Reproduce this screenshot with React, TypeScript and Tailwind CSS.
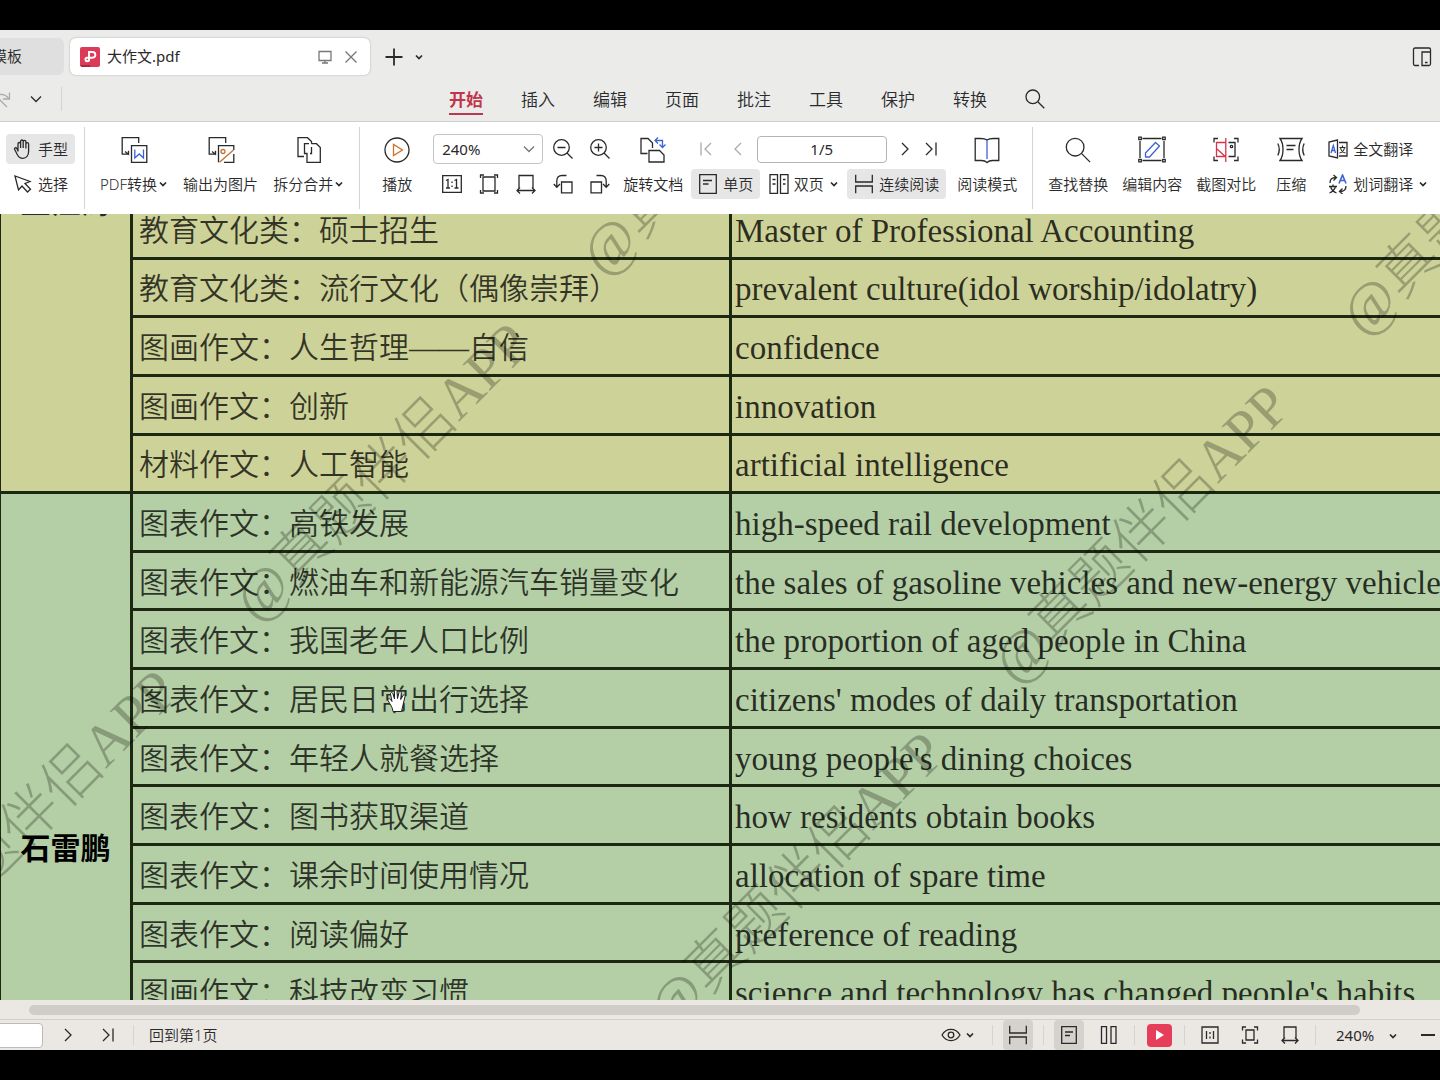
import type { ReactNode } from 'react';
import clsx from 'clsx';

type IconProps = { w?: number; h?: number; className?: string; children: ReactNode };

const Icon = ({ w = 20, h = 20, className, children }: IconProps) => (
  <svg
    width={w}
    height={h}
    viewBox={`0 0 ${w} ${h}`}
    fill="none"
    stroke="currentColor"
    strokeWidth="1.3"
    className={clsx('shrink-0', className)}
    aria-hidden="true"
  >
    {children}
  </svg>
);

const Caret = ({ className }: { className?: string }) => (
  <Icon w={10} h={10} className={className}>
    <path d="M2 3.5 5 6.5 8 3.5" strokeWidth="1.7" />
  </Icon>
);

const WideCaret = ({ className }: { className?: string }) => (
  <Icon w={12} h={10} className={className}>
    <path d="M1 2.5 6 7.5 11 2.5" />
  </Icon>
);

const NextIcon = () => (
  <Icon w={12} h={16}><path d="M3 2 9 8 3 14" /></Icon>
);

const LastIcon = () => (
  <Icon w={14} h={16}><path d="M2 2 8 8 2 14M12 1.5V14.5" /></Icon>
);

const ActualSizeIcon = () => (
  <Icon>
    <path d="M.7 1.7H19.3V18.3H.7Z" />
    <path d="M4 6.5 6 5.5V14M4 14H8M12.5 6.5 14.5 5.5V14M12.5 14H16.5M10 7.5V9M10 11.5V13" />
  </Icon>
);

const FitPageIcon = () => (
  <Icon>
    <path d="M4 3H16V17H4Z" />
    <path d="M1.5 4V1H5M15 1H18.5V4M18.5 16V19H15M5 19H1.5V16" />
  </Icon>
);

const FitWidthIcon = () => (
  <Icon>
    <path d="M3 14V1.5H17V14M1 16.5H19M4 13.5 1 16.5 4 19.5M16 13.5 19 16.5 16 19.5" />
  </Icon>
);

const SinglePageIcon = () => (
  <Icon>
    <path d="M1.7 .7H18.3V19.3H1.7ZM5 6.5H14M5 10H10.5" />
  </Icon>
);

const ContinuousIcon = () => (
  <Icon>
    <path d="M1.7 .7V8H18.3V.7M1.7 19.3V12H18.3V19.3" />
  </Icon>
);

const SearchIcon = ({ size = 20 }: { size?: number }) => (
  <svg width={size} height={size} viewBox="0 0 20 20" fill="none" stroke="currentColor" strokeWidth={26 / size} aria-hidden="true">
    <circle cx="7.8" cy="7.8" r="6.8" />
    <path d="M12.8 12.8 19.3 19.3" />
  </svg>
);

const HandIcon = () => (
  <Icon>
    <path d="M5 12.5V4.8a1.3 1.3 0 0 1 2.6 0V9V2.3a1.3 1.3 0 0 1 2.6 0V9V2.8a1.3 1.3 0 0 1 2.7 0V9.5V5a1.3 1.3 0 0 1 2.7 0v7.5c0 4-2.3 6.8-5.8 6.8-3 0-4.3-1.5-5.4-3.6L1.7 10.5c-.8-1.6 1.3-2.5 2.2-1L5 12" />
  </Icon>
);

const ArrowIcon = () => (
  <Icon>
    <path d="M2 2 5.5 16 9 12 14.5 18 17.5 15.2 12 9.5 17 7.5Z" />
  </Icon>
);

const ToWordIcon = () => (
  <Icon w={28} h={28}>
    <path d="M18.7 7V1.7H2.2V18.2H9M5 15.5 8.5 18.2V14.8" />
    <path d="M11.5 9.7H26.8V26.3H11.5Z" />
    <path d="M14.8 13.5V22L19.2 18 23.5 22V13.5" stroke="#3c62d8" />
  </Icon>
);

const ToImageIcon = () => (
  <Icon w={28} h={28}>
    <path d="M18.7 7V1.7H2.2V18.2H9M5 15.5 8.5 18.2V14.8" />
    <path d="M26.8 14V9.7H11.5V26.3M17 26.3H26.8V18" />
    <circle cx="16" cy="15.5" r="2" stroke="#c9702e" />
    <path d="M26.5 14 12.5 26.3" stroke="#c9702e" />
  </Icon>
);

const SplitMergeIcon = () => (
  <Icon w={28} h={28}>
    <path d="M9 20.5H3V1.7H12.5L16.5 5.5V7.7M14 7.7H9.5V17.5H12.5" />
    <path d="M16.5 11V17.5H15M16.5 7.7H21.5L25.3 11.5V26.3H12V17.5" />
  </Icon>
);

const PlayIcon = () => (
  <Icon w={28} h={28}>
    <circle cx="14" cy="14" r="12" />
    <path d="M10.500 8.5V19.5L19.5 14Z" stroke="#d0702c" />
  </Icon>
);

const ZoomGlass = ({ plus }: { plus?: boolean }) => (
  <Icon>
    <circle cx="8.5" cy="8.5" r="7.8" />
    <path d="M14 14 19.5 19.5M4.5 8.5H12.5" />
    {plus && <path d="M8.5 4.5V12.5" />}
  </Icon>
);

const RotateIcon = ({ flip }: { flip?: boolean }) => (
  <Icon>
    <g transform={flip ? 'translate(20 0) scale(-1 1)' : undefined}>
      <path d="M8.5 8H19V18.8H8.5Z" />
      <path d="M13.5 1.5H9C5.5 1.5 3.8 3.5 3.8 7V13M.7 10 3.8 13.2 7 10" />
    </g>
  </Icon>
);

const RotateDocIcon = () => (
  <Icon w={28} h={28}>
    <path d="M8.5 17.5H2V2.5H9L13.5 7V12" />
    <path d="M10 26V14.5H20.500L25 19V26Z" />
    <path d="M16.5 4.5H23.5V11M19 1.5 16 4.5 19 7.5M20.5 8.5 23.5 11.5 26.5 8.5" stroke="#3c62d8" />
  </Icon>
);

const TwoPageIcon = () => (
  <Icon>
    <path d="M1 .7H8.5V19.3H1ZM11.5 .7H19V19.3H11.5ZM3.5 5.5H6.5M3.5 10H6.5M14 5.5H16.5M14 10H16.5" />
  </Icon>
);

const BookIcon = () => (
  <Icon w={28} h={28}>
    <path d="M14 4C12 2.5 9 2.5 7.5 2.5H2.2V24.5H8.5C10.5 24.5 12.5 25 14 26.5C15.5 25 17.5 24.5 19.5 24.5H25.8V2.5H20.5C19 2.5 16 2.5 14 4Z" />
    <path d="M14 4V23" stroke="#3c62d8" />
  </Icon>
);

const EditContentIcon = () => (
  <Icon w={28} h={28}>
    <path d="M4.5 2.5H23.5M4.5 24.5H23.5M2 5V22M26 5V22" />
    <path d="M.8 1.2H3.3V3.7H.8ZM24.7 1.2H27.2V3.7H24.7ZM.8 23.3H3.3V25.8H.8ZM24.7 23.3H27.2V25.8H24.7Z" />
    <path d="M7.5 21V17L17.5 6.5 21.5 10 11.5 21Z" stroke="#3c62d8" strokeLinejoin="round" />
  </Icon>
);

const CompareIcon = () => (
  <Icon w={28} h={28}>
    <path d="M2 6.5V2.5H6M22 2.5H26V6.5M26 20.5V24.5H22M6 24.5H2V20.5" />
    <path d="M16.5 6.5H23V20.5H16.5" />
    <circle cx="19.5" cy="10.5" r="1.2" />
    <path d="M13.8 2V26M13.8 6.5H4.5V20.5H13.8M5 13 13.8 21" stroke="#d6334c" />
  </Icon>
);

const CompressIcon = () => (
  <Icon w={28} h={28}>
    <path d="M3 2.5H25C21 8 21 19 25 24.5H3C7 19 7 8 3 2.5ZM9.5 9.5H18.5M9.5 13.5H16.5" />
    <path d="M.8 7.5C2.5 11 2.5 16 .8 19.5M27.2 7.5C25.5 11 25.5 16 27.2 19.5" />
  </Icon>
);

const FullTranslateIcon = () => (
  <Icon>
    <path d="M11 3.5H19V17H11M9.5 1 1 3V17L9.5 19Z" />
    <path d="M3 14 5.3 6.5 7.5 14M3.8 11.5H6.8" stroke="#3c62d8" />
    <path d="M11.5 8.5H17.5M14.5 6.5V8.5M16.5 8.5C16 11.5 14 13.5 11.5 14M12.5 8.5C13 11.5 15 13.5 17.5 14" strokeWidth="1.1" />
  </Icon>
);

const WordTranslateIcon = () => (
  <Icon>
    <path d="M2 9C2 5 4 3.5 8 3.5M5.5 1 8.5 3.5 5.5 6.5M18 12C18 16 16 17.5 12 17.5M14.5 14.5 11.5 17.5 14.5 20" />
    <path d="M11 9.5 14.5 1 18 9.5M12.2 6.5H16.8" stroke="#3c62d8" strokeWidth="1.6" />
    <path d="M1 12.5H9M5 10.5V12.5M7.5 12.5C6.5 16 4 18 1.5 19M2.5 12.5C3.5 16 6 18 8.5 19" />
  </Icon>
);

const BigButton = ({ icon, label, caret }: { icon: ReactNode; label: string; caret?: boolean }) => (
  <button type="button" className="flex shrink-0 flex-col items-center gap-2.5 pt-3.5">
    <span className="flex h-7 items-center">{icon}</span>
    <span className="flex items-center gap-px text-[15px] leading-5">
      {label}
      {caret && <Caret />}
    </span>
  </button>
);

const SmallButton = ({ icon, label, active, caret }: { icon: ReactNode; label: string; active?: boolean; caret?: boolean }) => (
  <button
    type="button"
    className={clsx('flex h-[30px] items-center gap-[5px] rounded px-[7px] text-[15px]', active && 'bg-[#e6e6e6]')}
  >
    {icon}
    {label}
    {caret && <Caret />}
  </button>
);

const IconButton = ({ label, className, children }: { label: string; className?: string; children: ReactNode }) => (
  <button type="button" aria-label={label} className={clsx('flex items-center justify-center', className)}>
    {children}
  </button>
);

const Divider = ({ className }: { className?: string }) => (
  <div className={clsx('w-px shrink-0 bg-[#d4d4d4]', className)} />
);

const menus = ['开始', '插入', '编辑', '页面', '批注', '工具', '保护', '转换'];

function TitleTabs() {
  return (
    <div className="flex h-[53px] items-center">
      <button type="button" className="-ml-2 flex h-[37px] w-[72px] items-center rounded-r-md bg-[#dfdfdf] text-[15px]">
        模板
      </button>
      <div className="ml-1.5 flex h-[37px] w-[300px] items-center rounded-md bg-white pr-3 pl-2.5 text-[15px] shadow-[0_0_2px_rgba(0,0,0,0.3)]">
        <svg width="20" height="20" viewBox="0 0 20 20" fill="none" aria-hidden="true">
          <rect width="20" height="20" rx="2" fill="#dd3a58" />
          <path d="M0 18H10V20H2Z" fill="#a92743" />
          <path d="M9 14.5V5H12.5A2.8 2.8 0 0 1 12.5 10.7H7A1.8 1.8 0 1 0 9 12.5" stroke="#fff" strokeWidth="1.9" />
        </svg>
        <span className="ml-[7px] flex-1 font-normal">大作文.pdf</span>
        <Icon w={14} h={14} className="text-[#777]">
          <path d="M1 1.5H13V10.5H1ZM7 10.5V13M4 13H10" />
        </Icon>
        <IconButton label="关闭" className="ml-3 text-[#777]">
          <Icon w={14} h={14}><path d="M1.5 1.5 12.5 12.5M12.5 1.5 1.5 12.5" /></Icon>
        </IconButton>
      </div>
      <IconButton label="新建" className="ml-3.5">
        <Icon><path d="M10 1.5V18.5M1.5 10H18.5" strokeWidth="1.8" /></Icon>
      </IconButton>
      <IconButton label="更多标签" className="ml-2.5">
        <Caret />
      </IconButton>
      <IconButton label="多设备" className="mr-2 ml-auto">
        <Icon>
          <path d="M7 18.5H3A1.5 1.5 0 0 1 1.5 17V2.5A1.5 1.5 0 0 1 3 1H17A1.5 1.5 0 0 1 18.5 2.5V17A1.5 1.5 0 0 1 17 18.5H10V5H18.5M13 15.5H15.5" />
        </Icon>
      </IconButton>
    </div>
  );
}

function MenuBar() {
  return (
    <div className="flex h-[38px] pb-1.5">
      <IconButton label="重做" className="-ml-2 text-[#aaa]">
        <Icon><path d="M1 11C4 5 11 3 16.5 9M17.5 3.5V10H11M7 10 15 18" /></Icon>
      </IconButton>
      <IconButton label="更多" className="ml-[18px]">
        <WideCaret />
      </IconButton>
      <Divider className="mt-1 ml-[19px] h-6" />
      <nav className="ml-[387px] flex shrink-0 items-center gap-[38px] text-[17px]">
        {menus.map((menu, i) => (
          <button
            key={menu}
            type="button"
            className={clsx('border-b-2 pt-1 leading-[26px]', i === 0 ? 'border-[#b8384e] font-bold text-[#c0344c]' : 'border-transparent')}
          >
            {menu}
          </button>
        ))}
        <IconButton label="搜索"><SearchIcon /></IconButton>
      </nav>
    </div>
  );
}

function Ribbon() {
  return (
    <div className="flex h-[93px] shrink-0 overflow-hidden border-t border-[#cfcfcf] bg-white">
      <div className="flex flex-col gap-[5px] pt-3 pl-1.5">
        <SmallButton icon={<HandIcon />} label="手型" active />
        <SmallButton icon={<ArrowIcon />} label="选择" />
      </div>
      <Divider className="mt-[5px] ml-[9px] h-[82px]" />
      <div className="ml-[15px] flex gap-[15px]">
        <BigButton icon={<ToWordIcon />} label="PDF转换" caret />
        <BigButton icon={<ToImageIcon />} label="输出为图片" />
        <BigButton icon={<SplitMergeIcon />} label="拆分合并" caret />
      </div>
      <Divider className="mt-[5px] ml-[15px] h-[82px]" />
      <div className="ml-[22px] flex">
        <BigButton icon={<PlayIcon />} label="播放" />
      </div>
      <div className="ml-[21px] grid w-[177px] shrink-0 content-start gap-[5px] pt-3">
        <div className="flex h-[30px] items-center">
          <div className="relative">
            <select aria-label="缩放" className="h-[30px] w-[110px] appearance-none rounded border border-[#c4c4c4] bg-white pl-2 text-[15px] font-normal">
              <option>240%</option>
            </select>
            <WideCaret className="pointer-events-none absolute top-2.5 right-2 text-[#777]" />
          </div>
          <IconButton label="缩小" className="ml-2.5"><ZoomGlass /></IconButton>
          <IconButton label="放大" className="ml-auto"><ZoomGlass plus /></IconButton>
        </div>
        <div className="flex h-[30px] items-center justify-between pl-[9px]">
          <IconButton label="实际大小"><ActualSizeIcon /></IconButton>
          <IconButton label="适合页面"><FitPageIcon /></IconButton>
          <IconButton label="适合宽度"><FitWidthIcon /></IconButton>
          <IconButton label="向左旋转"><RotateIcon /></IconButton>
          <IconButton label="向右旋转"><RotateIcon flip /></IconButton>
        </div>
      </div>
      <div className="ml-[13px] flex">
        <BigButton icon={<RotateDocIcon />} label="旋转文档" />
      </div>
      <div className="ml-2 flex w-[255px] shrink-0 flex-col gap-[5px] pt-3">
        <div className="flex h-[30px] items-center justify-between px-2">
          <IconButton label="第一页" className="text-[#aaa]">
            <Icon w={14} h={16}><path d="M12 2 6 8 12 14M2 1.5V14.5" /></Icon>
          </IconButton>
          <IconButton label="上一页" className="ml-1.5 text-[#aaa]">
            <Icon w={12} h={16}><path d="M9 2 3 8 9 14" /></Icon>
          </IconButton>
          <input aria-label="页码" defaultValue="1/5" className="h-[27px] w-[130px] rounded border border-[#b4b4b4] text-center text-[15px] font-normal" />
          <IconButton label="下一页"><NextIcon /></IconButton>
          <IconButton label="最后一页"><LastIcon /></IconButton>
        </div>
        <div className="flex justify-between">
          <SmallButton icon={<SinglePageIcon />} label="单页" active />
          <SmallButton icon={<TwoPageIcon />} label="双页" caret />
          <SmallButton icon={<ContinuousIcon />} label="连续阅读" active />
        </div>
      </div>
      <div className="ml-[11px] flex">
        <BigButton icon={<BookIcon />} label="阅读模式" />
      </div>
      <Divider className="mt-[5px] ml-[15px] h-[82px]" />
      <div className="ml-[15px] flex gap-[14px]">
        <BigButton icon={<SearchIcon size={26} />} label="查找替换" />
        <BigButton icon={<EditContentIcon />} label="编辑内容" />
        <BigButton icon={<CompareIcon />} label="截图对比" />
      </div>
      <div className="ml-5 flex">
        <BigButton icon={<CompressIcon />} label="压缩" />
      </div>
      <div className="ml-[15px] flex shrink-0 flex-col gap-[5px] pt-3">
        <SmallButton icon={<FullTranslateIcon />} label="全文翻译" />
        <SmallButton icon={<WordTranslateIcon />} label="划词翻译" caret />
      </div>
    </div>
  );
}

type Row = { zh: string; en: string };

const yellowRows: Row[] = [
  { zh: '教育文化类：硕士招生', en: 'Master of Professional Accounting' },
  { zh: '教育文化类：流行文化（偶像崇拜）', en: 'prevalent culture(idol worship/idolatry)' },
  { zh: '图画作文：人生哲理——自信', en: 'confidence' },
  { zh: '图画作文：创新', en: 'innovation' },
  { zh: '材料作文：人工智能', en: 'artificial intelligence' },
];

const greenRows: Row[] = [
  { zh: '图表作文：高铁发展', en: 'high-speed rail development' },
  { zh: '图表作文：燃油车和新能源汽车销量变化', en: 'the sales of gasoline vehicles and new-energy vehicles' },
  { zh: '图表作文：我国老年人口比例', en: 'the proportion of aged people in China' },
  { zh: '图表作文：居民日常出行选择', en: "citizens' modes of daily transportation" },
  { zh: '图表作文：年轻人就餐选择', en: "young people's dining choices" },
  { zh: '图表作文：图书获取渠道', en: 'how residents obtain books' },
  { zh: '图表作文：课余时间使用情况', en: 'allocation of spare time' },
  { zh: '图表作文：阅读偏好', en: 'preference of reading' },
  { zh: '图画作文：科技改变习惯', en: "science and technology has changed people's habits" },
];

const RowCells = ({ row }: { row: Row }) => (
  <>
    <td className="overflow-hidden border-3 border-[#1c2812] pt-1 pl-1.5 text-[30px] leading-10 font-[350] text-black/75">
      {row.zh}
    </td>
    <td className="overflow-hidden border-3 border-r-0 border-[#1c2812] pt-1 pl-[3px] text-[33px] leading-10 text-black/80">{row.en}</td>
  </>
);

// centre of every stamp on the page, in page coordinates
const watermarks = [
  'left-[729px] top-[-88px]',
  'left-[1489px] top-[-28px]',
  'left-[382px] top-[258px]',
  'left-[1141px] top-[320px]',
  'left-[29px] top-[605px]',
  'left-[796px] top-[667px]',
];

function Document() {
  return (
    <main className="relative min-h-0 flex-1 overflow-hidden bg-[#b4cfa5] font-['Liberation_Serif','Noto_Sans_CJK_SC',serif]">
      <table className="-mt-4 h-[824px] w-full table-fixed border-collapse whitespace-nowrap">
        <colgroup>
          <col className="w-[131px]" />
          <col className="w-[599px]" />
          <col />
        </colgroup>
        <tbody className="bg-[#cdd298]">
          {yellowRows.map((row, i) => (
            <tr key={row.en}>
              {i === 0 && (
                <th rowSpan={yellowRows.length} className="border-3 border-l border-[#1c2812] align-top text-[30px] leading-6">
                  <div className="-mt-2.5">王江涛</div>
                </th>
              )}
              <RowCells row={row} />
            </tr>
          ))}
        </tbody>
        <tbody className="bg-[#b4cfa5]">
          {greenRows.map((row, i) => (
            <tr key={row.en}>
              {i === 0 && (
                <th rowSpan={greenRows.length} className="border-3 border-l border-[#1c2812] pt-[184px] text-[30px] leading-10 text-black">
                  石雷鹏
                </th>
              )}
              <RowCells row={row} />
            </tr>
          ))}
        </tbody>
      </table>
      {watermarks.map((place) => (
        <div
          key={place}
          className={clsx('pointer-events-none absolute -translate-x-1/2 -translate-y-1/2 -rotate-45 text-[58px] leading-none font-light whitespace-nowrap text-black/25', place)}
        >
          @真题伴侣APP
        </div>
      ))}
      <svg width="20" height="24" viewBox="0 0 20 24" className="absolute top-[475px] left-[387px]" aria-hidden="true">
        <path
          d="M6 22.5 5 18.5 1 11.5C.5 9.5 2.5 9 3.5 10.5L5 12.5 3.5 5C3.5 3 5.5 3 6 5L7.5 10 7.5 2.5C7.5 .5 9.8 .5 10 2.5L10.5 9.5 12 3.5C12.5 1.8 14.5 2.2 14.3 4L13.7 10.5 16 6.5C17 5 18.5 6 18 7.5L16 16 14.5 22.5Z"
          fill="#fff"
          stroke="#222"
        />
      </svg>
    </main>
  );
}

function StatusBar() {
  return (
    <footer className="shrink-0 bg-[#ebe7e3]">
      <div className="flex h-5 items-start border-b border-[#d2cecb] pt-[5px] pr-20 pl-[29px]">
        <div className="h-[10px] flex-1 rounded-full bg-[#d0ccc8]" />
      </div>
      <div className="flex h-[30px] items-center text-[15px]">
        <input aria-label="跳转页码" className="-ml-2 h-[25px] w-[51px] rounded border border-[#bbb] bg-white" />
        <IconButton label="下一页" className="ml-[19px]"><NextIcon /></IconButton>
        <IconButton label="最后一页" className="ml-[27px]"><LastIcon /></IconButton>
        <Divider className="ml-[18px] h-5" />
        <button type="button" className="ml-[15px]">回到第1页</button>
        <div className="ml-auto flex items-center">
          <button type="button" aria-label="护眼模式" className="flex items-center gap-1">
            <Icon>
              <path d="M1 10C5.5 2.5 14.5 2.5 19 10C14.5 17.5 5.5 17.5 1 10Z" />
              <circle cx="10" cy="10" r="2.8" />
            </Icon>
            <Caret />
          </button>
          <Divider className="mx-[10px] ml-[17px] h-5" />
          <IconButton label="连续阅读" className="size-[30px] rounded bg-[#d5d1cd]"><ContinuousIcon /></IconButton>
          <Divider className="mx-[10px] h-5" />
          <IconButton label="单页" className="size-[30px] rounded bg-[#d5d1cd]">
            <Icon w={16} h={18}><path d="M.7 .7H15.3V17.3H.7ZM4 6H12M4 9.5H9" /></Icon>
          </IconButton>
          <IconButton label="双页" className="mx-4">
            <Icon w={18} h={18}><path d="M1.5 .7H6.5V17.3H1.5ZM11 .7H16V17.3H11Z" /></Icon>
          </IconButton>
          <Divider className="h-5" />
          <IconButton label="播放" className="mx-3 h-[23px] w-[25px] rounded-sm bg-[#e63e5a]">
            <svg width="10" height="12" viewBox="0 0 10 12" aria-hidden="true"><path d="M1 1 9 6 1 11Z" fill="#fff" /></svg>
          </IconButton>
          <Divider className="h-5" />
          <div className="mx-4 flex items-center gap-[22px]">
            <IconButton label="实际大小">
              <Icon w={18} h={18}><path d="M1 1H17V17H1ZM5.5 5V13M12.5 5V13M9 6V8M9 10.5V12.5" /></Icon>
            </IconButton>
            <IconButton label="适合页面">
              <Icon w={18} h={18}><path d="M5 4H13V14H5ZM1.5 4.5V1H5M13 1H16.5V4.5M16.5 13.5V17H13M5 17H1.5V13.5" /></Icon>
            </IconButton>
            <IconButton label="适合宽度">
              <Icon w={18} h={18}><path d="M3 12.5V1H15V12.5M1 14.5H17M4 11.5 1 14.5 4 17.5M14 11.5 17 14.5 14 17.5" /></Icon>
            </IconButton>
          </div>
          <Divider className="h-5" />
          <div className="relative ml-5">
            <select aria-label="页面缩放" className="h-6 w-[62px] appearance-none text-[15px] font-normal">
              <option>240%</option>
            </select>
            <Caret className="pointer-events-none absolute top-2 right-0" />
          </div>
          <IconButton label="缩小" className="ml-[22px]">
            <Icon w={20} h={10}><path d="M1 5H15" strokeWidth="2" /></Icon>
          </IconButton>
        </div>
      </div>
    </footer>
  );
}

export default function App() {
  return (
    <div className="flex h-screen flex-col overflow-hidden bg-black py-[30px] font-['Noto_Sans','Noto_Sans_CJK_SC',sans-serif] font-[350] text-[#2a2a2a]">
      <header className="shrink-0 overflow-hidden bg-[#ebebea]">
        <TitleTabs />
        <MenuBar />
      </header>
      <Ribbon />
      <Document />
      <StatusBar />
    </div>
  );
}
